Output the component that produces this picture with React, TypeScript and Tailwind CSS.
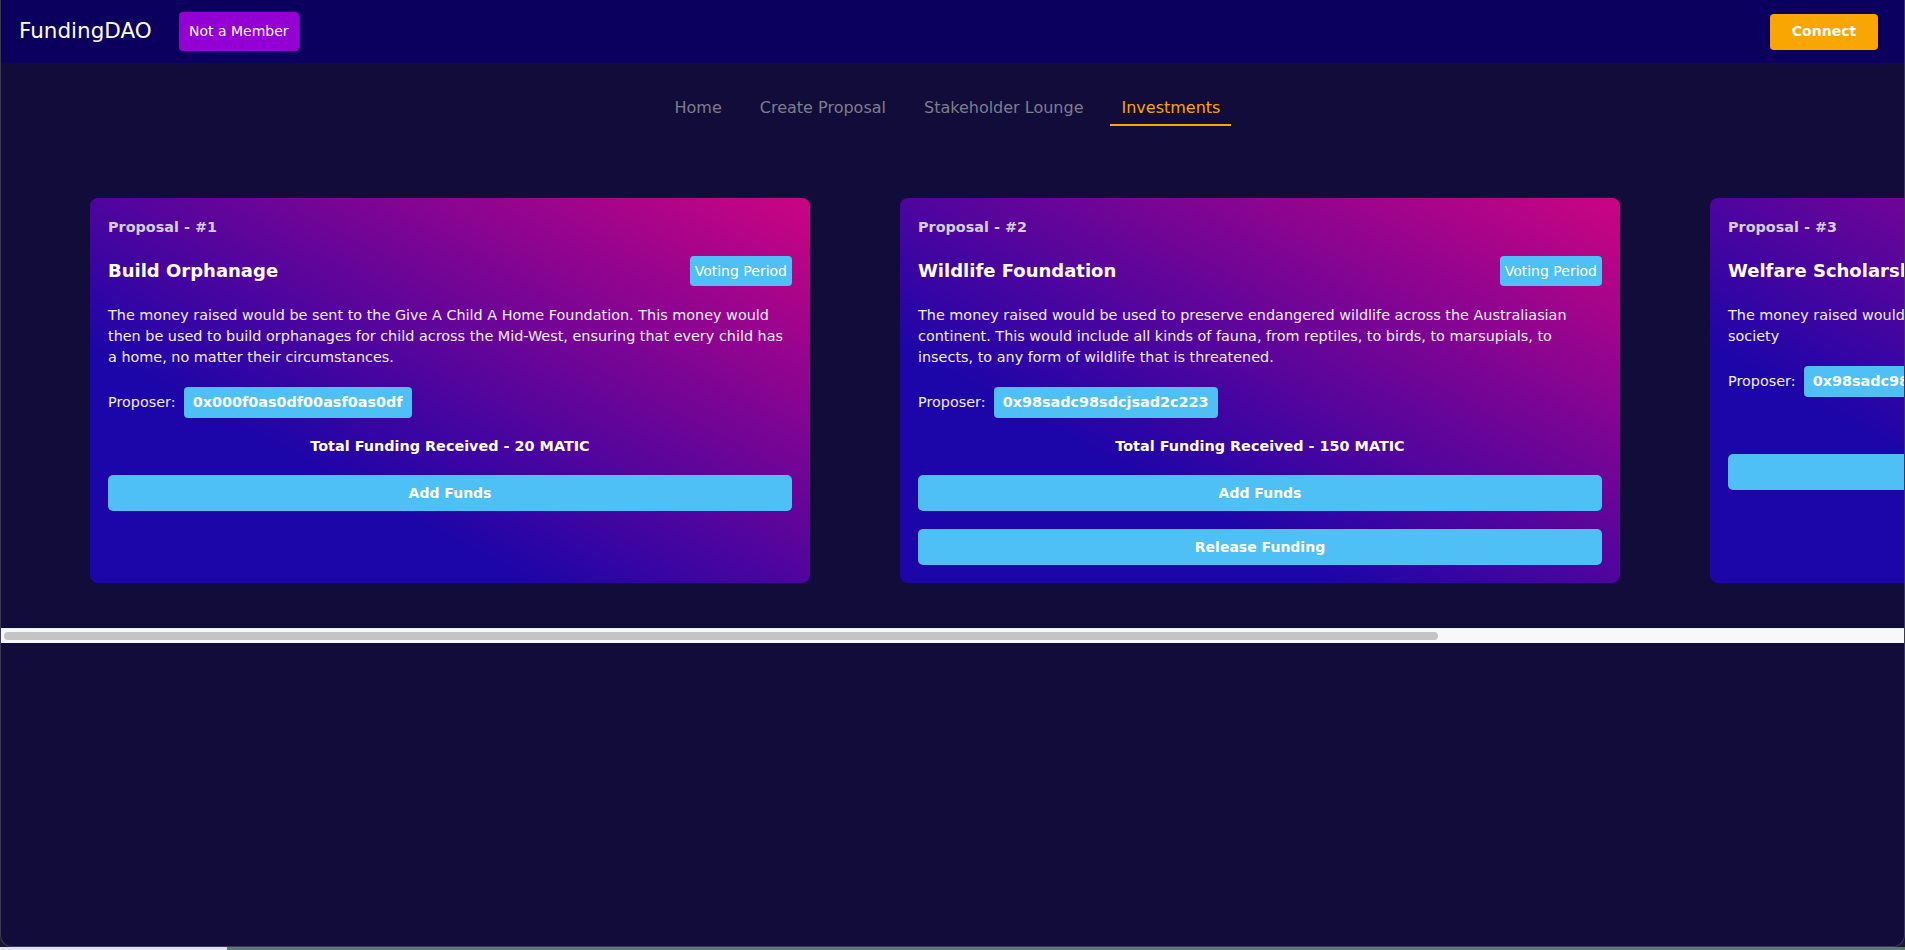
import React from "react";

type Proposal = {
  id: number;
  title: string;
  desc: string;
  proposer: string;
  funding: string;
  release?: boolean;
};

const proposals: Proposal[] = [
  {
    id: 1,
    title: "Build Orphanage",
    desc: "The money raised would be sent to the Give A Child A Home Foundation. This money would then be used to build orphanages for child across the Mid-West, ensuring that every child has a home, no matter their circumstances.",
    proposer: "0x000f0as0df00asf0as0df",
    funding: "Total Funding Received - 20 MATIC",
  },
  {
    id: 2,
    title: "Wildlife Foundation",
    desc: "The money raised would be used to preserve endangered wildlife across the Australiasian continent. This would include all kinds of fauna, from reptiles, to birds, to marsupials, to insects, to any form of wildlife that is threatened.",
    proposer: "0x98sadc98sdcjsad2c223",
    funding: "Total Funding Received - 150 MATIC",
    release: true,
  },
  {
    id: 3,
    title: "Welfare Scholarship",
    desc: "The money raised would be used to fund scholarships for underprivileged members of our society",
    proposer: "0x98sadc98sdcjsad2c223",
    funding: "Total Funding Received - 0 MATIC",
  },
];

function Card({ p }: { p: Proposal }) {
  return (
    <div className="shrink-0 w-[720px] rounded-[8px] bg-[linear-gradient(to_top_right,#1c05a9_0%,#1c05a9_30%,#cc0482_100%)] px-[18px] pt-[18px] pb-[18px] flex flex-col">
      <div className="text-[14.4px] leading-[22px] font-bold text-[#d2d0dc]">Proposal - #{p.id}</div>
      <div className="mt-[18px] flex items-center justify-between h-[30px]">
        <div className="text-[18px] font-bold text-white leading-[30px]">{p.title}</div>
        <div className="h-[30px] px-[5px] rounded-[4px] bg-[#4fc0f5] text-white text-[14px] flex items-center">Voting Period</div>
      </div>
      <p className="mt-[19px] text-[14.4px] leading-[21px] text-[#f1eff8]">{p.desc}</p>
      <div className="mt-[19px] flex items-center gap-[8px]">
        <span className="text-[14.4px] text-[#f1eff8]">Proposer:</span>
        <span className="h-[31px] px-[9px] rounded-[4px] bg-[#4fc0f5] text-white text-[14.4px] font-bold flex items-center">{p.proposer}</span>
      </div>
      <div className="mt-[18px] text-center text-[14.4px] leading-[21px] font-bold text-white">{p.funding}</div>
      <button className="mt-[18px] h-[36px] w-full rounded-[5px] bg-[#4fc0f5] text-white text-[14px] font-bold">Add Funds</button>
      {p.release && (
        <button className="mt-[18px] h-[36px] w-full rounded-[5px] bg-[#4fc0f5] text-white text-[14px] font-bold">Release Funding</button>
      )}
    </div>
  );
}

export default function App() {
  const tabs = ["Home", "Create Proposal", "Stakeholder Lounge", "Investments"];
  return (
    <div className="w-[1905px] h-[950px] bg-[#1b1a2b] font-['DejaVu_Sans','Liberation_Sans',sans-serif] flex flex-col overflow-hidden">
      <div className="h-[947px] flex flex-col bg-[#110c3a] border-l border-r border-b border-[#3c3858] rounded-b-[12px] overflow-hidden">
        <header className="h-[63px] shrink-0 bg-[#0c005e] flex items-center pl-[18px] pr-[26px]">
          <div className="text-[21.5px] text-white">FundingDAO</div>
          <div className="ml-[27px] h-[39px] w-[120px] justify-center rounded-[4px] bg-[#9400d3] text-white text-[14px] flex items-center">Not a Member</div>
          <div className="flex-1" />
          <button className="h-[36px] w-[108px] rounded-[4px] bg-[#f9a602] text-white text-[14px] font-bold">Connect</button>
        </header>
        <nav className="mt-[33px] flex justify-center gap-[16px] pr-[10px]">
          {tabs.map((t) => {
            const active = t === "Investments";
            return (
              <div
                key={t}
                className={
                  active
                    ? "px-[11px] h-[30px] leading-[24px] text-[16px] text-[#f9a602] border-b-2 border-[#f9a602]"
                    : "px-[11px] h-[30px] leading-[24px] text-[16px] text-[#7f7d8c] border-b-2 border-transparent"
                }
              >
                {t}
              </div>
            );
          })}
        </nav>
        <div className="mt-[72px] flex gap-[90px] px-[89px] pb-[45px] overflow-hidden">
          {proposals.map((p) => (
            <Card key={p.id} p={p} />
          ))}
        </div>
        <div className="h-[15px] shrink-0 bg-[#f8f8f8] border-t border-[#ececf0] pt-[3px] pl-[3px]">
          <div className="h-[8px] w-[1434px] rounded-full bg-[#c4c4c4]" />
        </div>
        <div className="flex-1" />
      </div>
      <div className="h-[3px] flex">
        <div className="w-[227px] bg-[#e4e2ee]" />
        <div className="flex-1 bg-[#5b7a72]" />
      </div>
    </div>
  );
}
